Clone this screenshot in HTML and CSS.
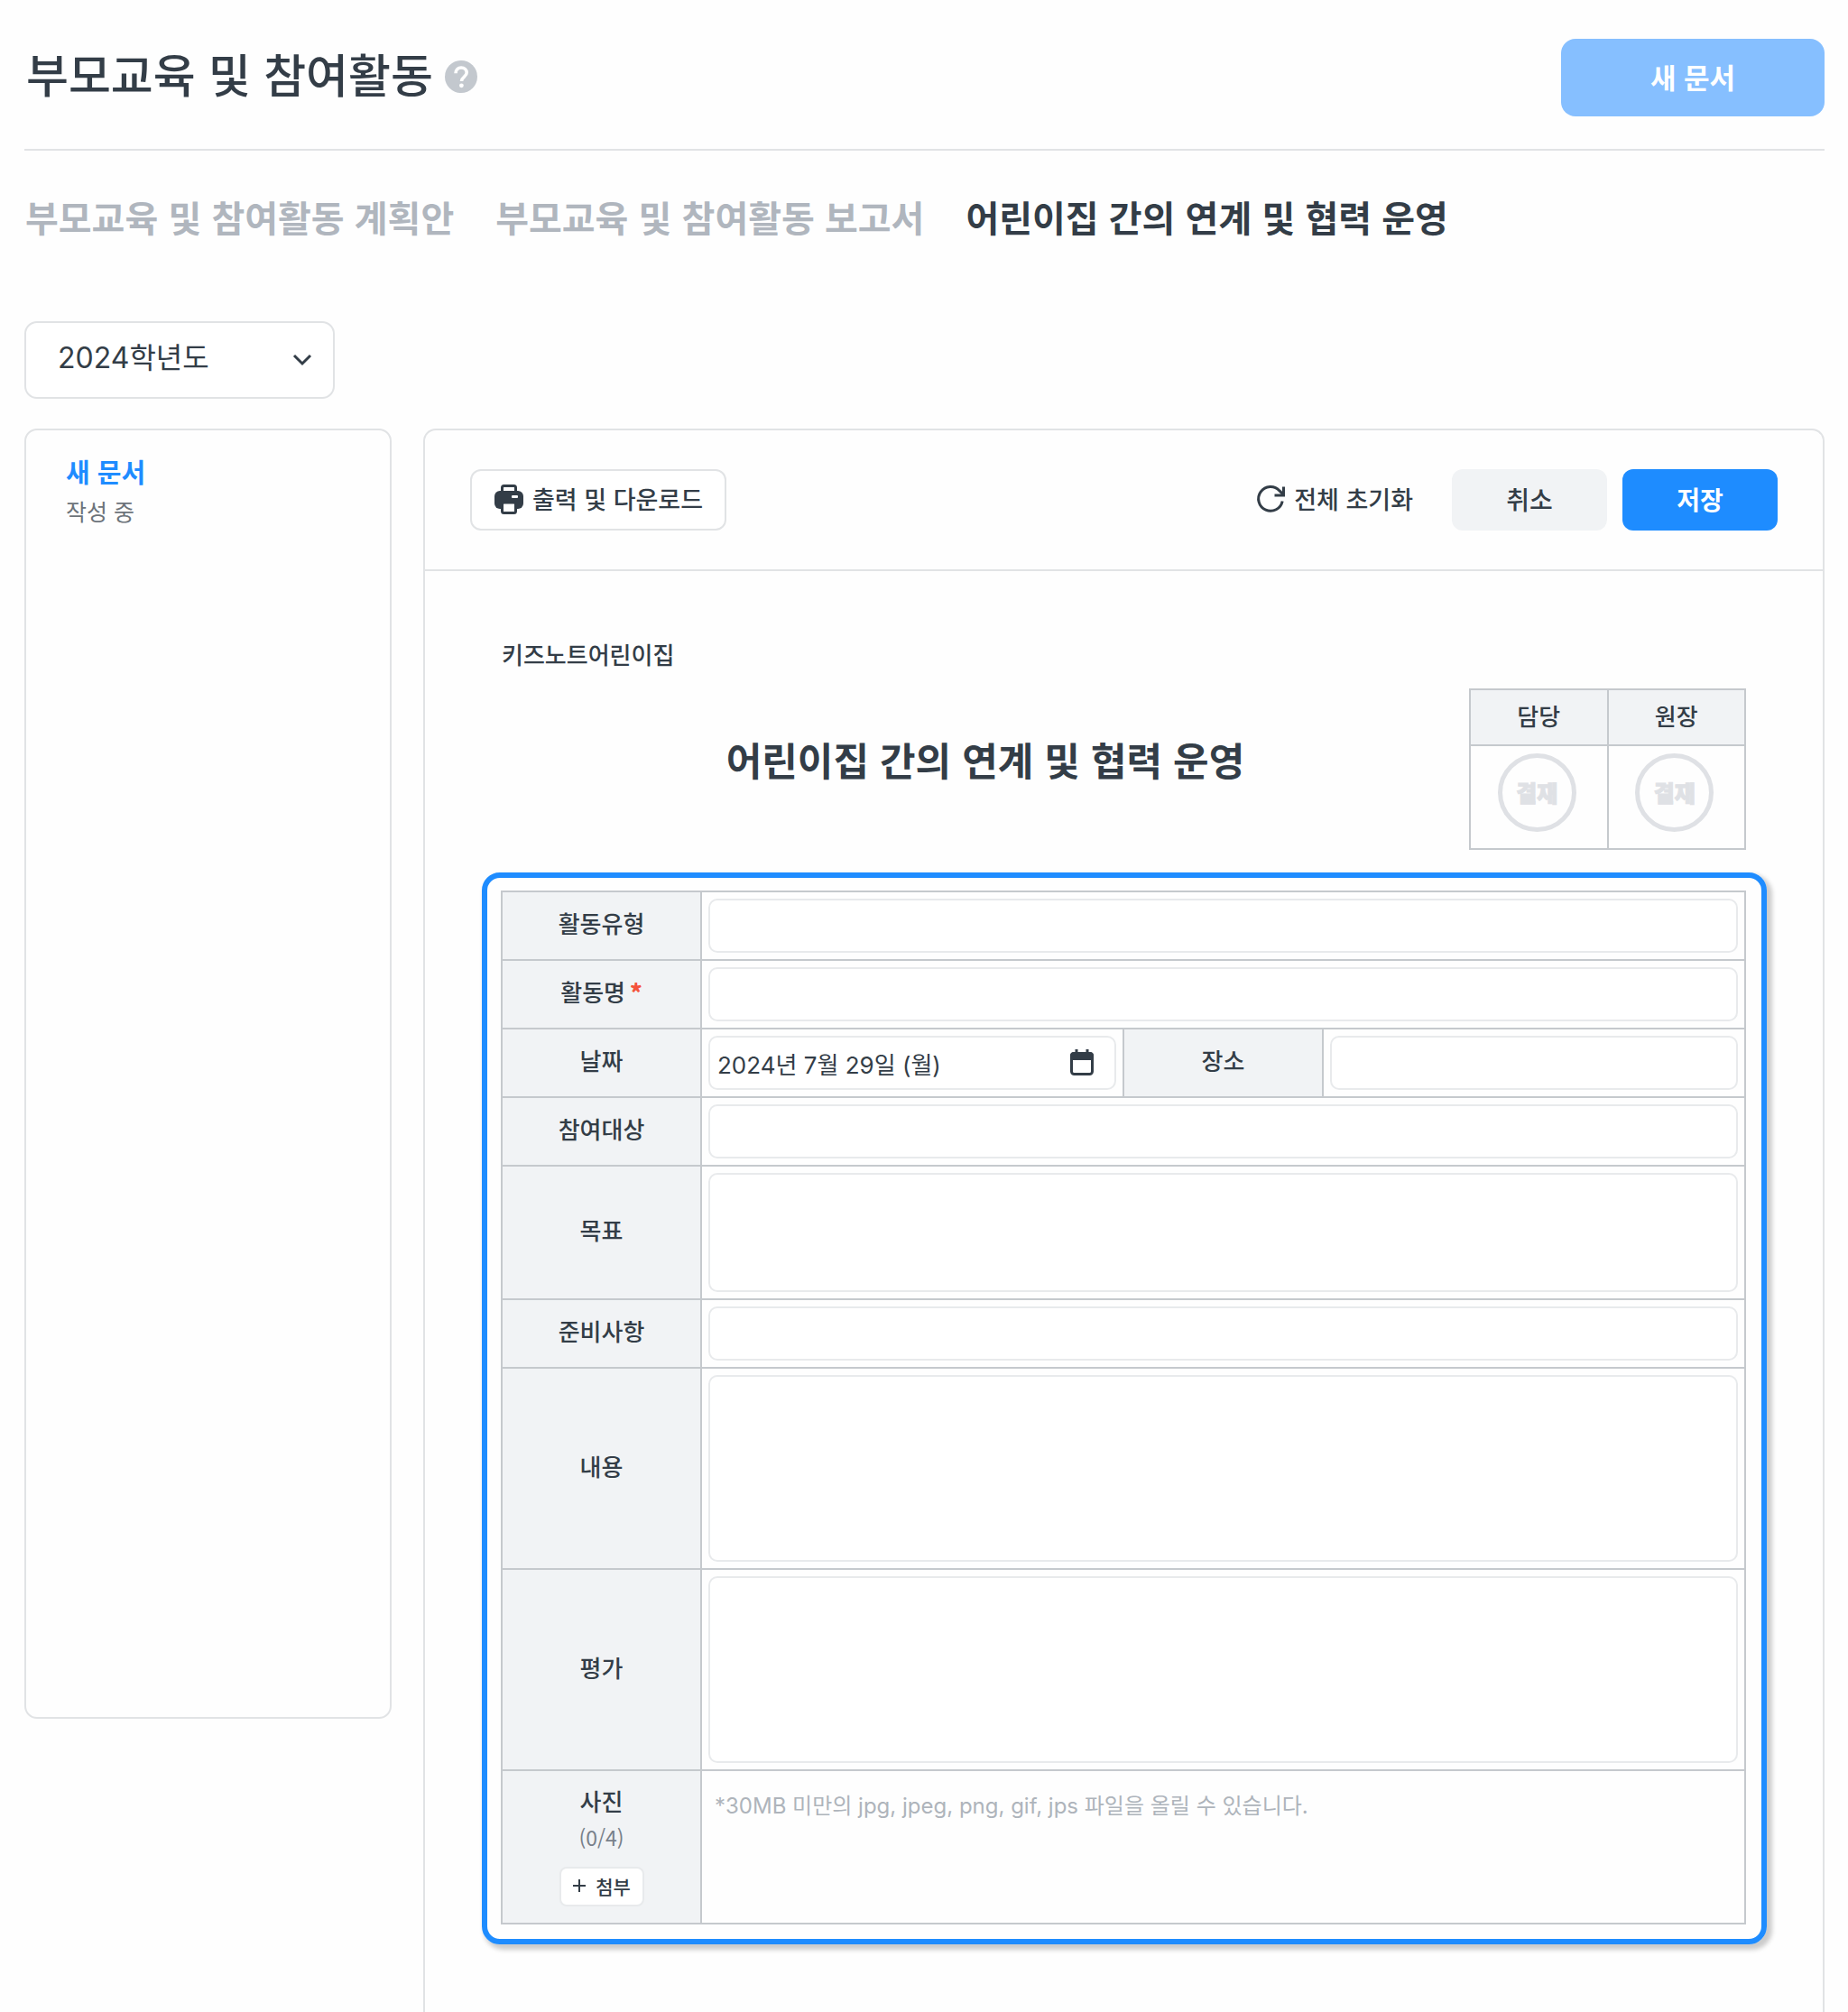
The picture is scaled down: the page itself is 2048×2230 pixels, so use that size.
FILE: index.html
```html
<!DOCTYPE html>
<html lang="ko">
<head>
<meta charset="utf-8">
<meta name="viewport" content="width=device-width, initial-scale=1">
<title>부모교육 및 참여활동</title>
<link rel="stylesheet" href="styles.css">
</head>
<body>
<div class="page">
  <header class="page-header">
    <h1 class="page-title">부모교육 및 참여활동</h1>
    <button class="help" type="button" aria-label="도움말">
      <svg viewBox="0 0 36 36" width="36" height="36" aria-hidden="true">
        <circle cx="18" cy="18" r="18" fill="#c3c8ce"/>
        <path d="M12 14.200c0-3.800 2.600-6.200 6.100-6.200s6.100 2.300 6.100 5.600c0 4.400-5.700 4.600-5.700 9.400" fill="none" stroke="#fff" stroke-width="3.600"/>
        <circle cx="18.400" cy="27.800" r="2.400" fill="#fff"/>
      </svg>
    </button>
    <button class="btn-new" type="button">새 문서</button>
  </header>

  <nav class="tabs">
    <a class="tab" href="#plan">부모교육 및 참여활동 계획안</a>
    <a class="tab" href="#report">부모교육 및 참여활동 보고서</a>
    <a class="tab tab-active" href="#link" aria-current="page">어린이집 간의 연계 및 협력 운영</a>
  </nav>

  <div class="year">
    <select class="year-select" aria-label="학년도">
      <option>2024학년도</option>
    </select>
    <svg class="year-arrow" viewBox="0 0 24 24" width="24" height="24" aria-hidden="true">
      <path d="M3 7l9 9 9-9" fill="none" stroke="#333d47" stroke-width="3"/>
    </svg>
  </div>

  <div class="columns">
    <aside class="doc-list">
      <a class="doc-item" href="#new">
        <strong class="doc-name">새 문서</strong>
        <span class="doc-state">작성 중</span>
      </a>
    </aside>

    <main class="doc">
      <div class="toolbar">
        <button class="btn-print" type="button">
          <svg viewBox="0 0 34 34" width="34" height="34" aria-hidden="true">
            <path d="M9.500 9V4.500a2 2 0 0 1 2-2h11a2 2 0 0 1 2 2V9" fill="none" stroke="#333d47" stroke-width="3"/>
            <path d="M7 8h20a6 6 0 0 1 6 6v8a6 6 0 0 1-6 6H7a6 6 0 0 1-6-6v-8a6 6 0 0 1 6-6z" fill="#333d47"/>
            <rect x="9.500" y="21" width="15" height="11.500" rx="2" fill="#fff" stroke="#333d47" stroke-width="3"/>
            <rect x="20" y="13" width="7" height="3" rx="1" fill="#fff"/>
          </svg>
          출력 및 다운로드
        </button>
        <button class="btn-reset" type="button">
          <svg viewBox="0 0 34 34" width="34" height="34" aria-hidden="true">
            <path d="M30.200 19.500a13.400 13.400 0 1 1-3.200-11.600L31 12" fill="none" stroke="#333d47" stroke-width="3"/>
            <path d="M31.500 3.500V13H21.500" fill="none" stroke="#333d47" stroke-width="3"/>
          </svg>
          전체 초기화
        </button>
        <button class="btn btn-cancel" type="button">취소</button>
        <button class="btn btn-save" type="button">저장</button>
      </div>

      <div class="sheet">
        <p class="school">키즈노트어린이집</p>
        <div class="sheet-head">
          <h2 class="sheet-title">어린이집 간의 연계 및 협력 운영</h2>
          <table class="approval">
            <tr><th scope="col">담당</th><th scope="col">원장</th></tr>
            <tr>
              <td><span class="stamp">결재</span></td>
              <td><span class="stamp">결재</span></td>
            </tr>
          </table>
        </div>

        <div class="highlight">
          <table class="form">
            <colgroup><col class="col-label"><col><col class="col-label"><col></colgroup>
            <tr>
              <th scope="row"><label for="type">활동유형</label></th>
              <td colspan="3"><input class="field" id="type" type="text"></td>
            </tr>
            <tr>
              <th scope="row"><label for="name">활동명<span class="required">*</span></label></th>
              <td colspan="3"><input class="field" id="name" type="text" required></td>
            </tr>
            <tr>
              <th scope="row"><label for="date">날짜</label></th>
              <td>
                <div class="field date-field">
                  <input class="date-input" id="date" type="text" value="2024년 7월 29일 (월)">
                  <svg viewBox="0 0 28 30" width="28" height="30" aria-hidden="true">
                    <path d="M8 0v4M20 0v4" stroke="#333d47" stroke-width="3"/>
                    <rect x="2.500" y="4.500" width="23" height="23" rx="3" fill="#fff" stroke="#333d47" stroke-width="3"/>
                    <path d="M1 12V7a4 4 0 0 1 4-4h18a4 4 0 0 1 4 4v5z" fill="#333d47"/>
                  </svg>
                </div>
              </td>
              <th scope="row"><label for="place">장소</label></th>
              <td><input class="field" id="place" type="text"></td>
            </tr>
            <tr>
              <th scope="row"><label for="target">참여대상</label></th>
              <td colspan="3"><input class="field" id="target" type="text"></td>
            </tr>
            <tr>
              <th scope="row"><label for="goal">목표</label></th>
              <td colspan="3"><textarea class="field area" id="goal"></textarea></td>
            </tr>
            <tr>
              <th scope="row"><label for="prep">준비사항</label></th>
              <td colspan="3"><input class="field" id="prep" type="text"></td>
            </tr>
            <tr>
              <th scope="row"><label for="content">내용</label></th>
              <td colspan="3"><textarea class="field area area-tall" id="content"></textarea></td>
            </tr>
            <tr>
              <th scope="row"><label for="review">평가</label></th>
              <td colspan="3"><textarea class="field area area-tall" id="review"></textarea></td>
            </tr>
            <tr>
              <th scope="row">
                <div class="photo">
                  <span>사진</span>
                  <span class="photo-count">(0/4)</span>
                  <button class="btn-attach" type="button">
                    <svg viewBox="0 0 16 16" width="16" height="16" aria-hidden="true">
                      <path d="M8 1v14M1 8h14" stroke="#333d47" stroke-width="2"/>
                    </svg>
                    첨부
                  </button>
                </div>
              </th>
              <td class="hint-cell" colspan="3"><p class="hint">*30MB 미만의 jpg, jpeg, png, gif, jps 파일을 올릴 수 있습니다.</p></td>
            </tr>
          </table>
        </div>
      </div>
    </main>
  </div>
</div>
</body>
</html>
```
FILE: styles.css
```css
*, *::before, *::after { box-sizing: border-box; }

body {
  margin: 0;
  background: #fefefe;
  color: #333d47;
  font-family: "Noto Sans CJK KR", sans-serif;
  font-size: 26px;
  font-weight: 500;
  line-height: 40px;
}

h1, h2, p { margin: 0; }
a { color: inherit; text-decoration: none; }
svg { display: block; flex: none; }

button, input, select, textarea {
  margin: 0;
  color: inherit;
  font: inherit;
}

button {
  display: flex;
  align-items: center;
  justify-content: center;
  padding: 0 0 2px;
  border: 0;
  background: none;
  white-space: nowrap;
  cursor: pointer;
}

.page {
  display: flex;
  flex-direction: column;
  min-height: 100vh;
  padding: 0 26px 0 27px;
}

.page-header {
  display: flex;
  align-items: center;
  height: 167px;
  padding-top: 6px;
  border-bottom: 2px solid #e1e3e5;
}

.page-title {
  padding: 0 0 9px 2px;
  font-size: 51px;
  font-weight: 500;
  line-height: 76px;
}

.help { margin-left: 13px; }

.btn-new {
  width: 292px;
  height: 86px;
  margin-left: auto;
  border-radius: 16px;
  background: #86bfff;
  color: #fff;
  font-size: 31px;
  font-weight: 700;
}

.tabs {
  display: flex;
  gap: 46px;
  padding: 43px 0 0 1px;
  font-size: 40px;
  font-weight: 700;
  line-height: 60px;
}

.tab { color: #b0b6be; }
.tab-active { color: #333d47; }

.year {
  position: relative;
  width: 344px;
  margin-top: 86px;
}

.year-select {
  display: block;
  width: 100%;
  height: 86px;
  padding: 0 64px 4px 35px;
  border: 2px solid #e1e3e5;
  border-radius: 14px;
  background: #fff;
  appearance: none;
  font-family: "Inter", "Noto Sans CJK KR", sans-serif;
  font-size: 32px;
  font-weight: 400;
}

.year-arrow {
  position: absolute;
  top: 31px;
  right: 24px;
  pointer-events: none;
}

.columns {
  display: flex;
  flex: 1;
  align-items: flex-start;
  gap: 35px;
  margin-top: 33px;
}

.doc-list {
  flex: none;
  width: 407px;
  min-height: 1430px;
  padding: 25px 44px;
  border: 2px solid #e1e3e5;
  border-radius: 14px;
}

.doc-item { display: flex; flex-direction: column; gap: 4px; }
.doc-name { color: #1e8cff; font-size: 29px; font-weight: 700; }
.doc-state { color: #6c737a; font-size: 25px; font-weight: 400; }

.doc {
  flex: 1;
  align-self: stretch;
  border: 2px solid #e1e3e5;
  border-bottom: 0;
  border-radius: 14px 14px 0 0;
}

.toolbar {
  display: flex;
  align-items: center;
  height: 156px;
  padding: 0 50px;
  border-bottom: 2px solid #e1e3e5;
  font-size: 27px;
}

.btn-print {
  gap: 9px;
  width: 284px;
  height: 68px;
  border: 2px solid #e1e3e5;
  border-radius: 12px;
  background: #fff;
}

.btn-reset { gap: 9px; margin: 0 43px 0 auto; }

.btn {
  width: 172px;
  height: 68px;
  border-radius: 12px;
  font-size: 28px;
}

.btn-cancel { margin-right: 17px; background: #f1f3f5; }
.btn-save { background: #1e8cff; color: #fff; font-weight: 700; }

.sheet { padding: 72px 62px 74px 63px; }
.school { padding-left: 22px; }

.sheet-head {
  display: flex;
  align-items: flex-start;
  padding: 18px 23px 0 22px;
}

.sheet-title {
  flex: 1;
  padding-top: 44px;
  font-size: 43px;
  font-weight: 700;
  line-height: 68px;
  text-align: center;
}

.approval, .form { border-collapse: collapse; table-layout: fixed; }
th, td { padding: 0; border: 2px solid #c5c9cd; }
th { background: #f1f3f5; font-weight: 500; }

.approval { width: 307px; }
.approval th { height: 62px; padding-bottom: 4px; }
.approval td { height: 115px; padding: 0 4px 10px 0; }

.stamp {
  display: flex;
  align-items: center;
  justify-content: center;
  width: 87px;
  height: 87px;
  margin: 0 auto;
  padding-bottom: 2px;
  border: 5px solid #dfe1e5;
  border-radius: 50%;
  color: #dfe1e5;
  font-size: 25px;
  font-weight: 900;
  -webkit-text-stroke: 1px #dfe1e5;
}

.highlight {
  margin-top: 25px;
  padding: 14px 17px 16px 15px;
  border: 6px solid #1e8cff;
  border-radius: 20px;
  box-shadow: 4px 4px 5px 2px rgba(0, 0, 0, 0.2);
}

.form { width: 100%; }
.col-label { width: 221px; }
.form td { padding: 7px; }
.form label { display: block; padding-bottom: 6px; }
.required { margin-left: 5px; color: #f4533c; font-weight: 900; }

.field {
  display: block;
  width: 100%;
  height: 60px;
  padding: 0 8px;
  border: 2px solid #e8eaec;
  border-radius: 10px;
  background: #fff;
}

.area { height: 132px; resize: none; }
.area-tall { height: 207px; }

.date-field { display: flex; align-items: center; padding-right: 22px; }

.date-input {
  flex: 1;
  min-width: 0;
  height: 100%;
  padding: 0;
  border: 0;
  background: none;
  font-family: "Inter", "Noto Sans CJK KR", sans-serif;
  font-weight: 400;
}

.photo {
  display: flex;
  flex-direction: column;
  align-items: center;
  height: 168px;
  padding-top: 13px;
}

.photo-count { color: #78808a; font-size: 23px; font-weight: 400; }

.btn-attach {
  gap: 10px;
  width: 94px;
  height: 44px;
  margin-top: 13px;
  border: 2px solid #e8eaec;
  border-radius: 8px;
  background: #fff;
  font-size: 21px;
}

.form .hint-cell { padding: 19px 14px; vertical-align: top; }

.hint {
  color: #aeb4bb;
  font-family: "Inter", "Noto Sans CJK KR", sans-serif;
  font-size: 24px;
  font-weight: 400;
}
```
